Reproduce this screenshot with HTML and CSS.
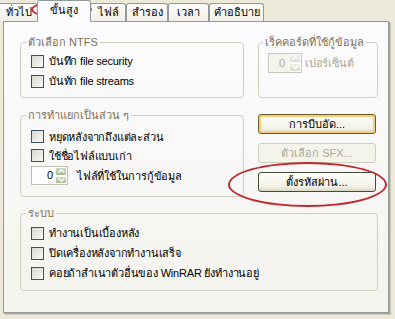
FILE: index.html
```html
<!DOCTYPE html>
<html lang="th">

<head>
    <meta charset="UTF-8">
    <meta name="viewport" content="width=device-width, initial-scale=1.0">
    <title>ขั้นสูง</title>
    <link rel="stylesheet" href="styles.css">
</head>

<body>
    <div class="window">
        <!-- แท็บด้านบน -->
        <ul class="tabs">
            <li class="tab tab-general">ทั่วไป</li>
            <li class="tab tab-advanced active">ขั้นสูง</li>
            <li class="tab tab-files">ไฟล์</li>
            <li class="tab tab-backup">สำรอง</li>
            <li class="tab tab-time">เวลา</li>
            <li class="tab tab-comment">คำอธิบาย</li>
        </ul>

        <div class="panel">
            <div class="row row-top">
                <fieldset class="group group-ntfs">
                    <legend>ตัวเลือก NTFS</legend>
                    <label class="check"><span class="box"></span>บันทึก file security</label>
                    <label class="check"><span class="box"></span>บันทัก file streams</label>
                </fieldset>
                <fieldset class="group group-recovery">
                    <legend>เร็คคอร์ดที่ใช้กู้ข้อมูล</legend>
                    <div class="spin-row disabled">
                        <span class="spin">
                            <span class="spin-value">0</span>
                            <span class="spin-btns">
                                <span class="spin-btn"><svg width="7" height="4" viewBox="0 0 7 4"><polyline points="0.5,3.5 3.5,0.8 6.5,3.5" fill="none" stroke="#fff" stroke-width="1.5"/></svg></span>
                                <span class="spin-btn"><svg width="7" height="4" viewBox="0 0 7 4"><polyline points="0.5,0.5 3.5,3.2 6.5,0.5" fill="none" stroke="#fff" stroke-width="1.5"/></svg></span>
                            </span>
                        </span>
                        <span>เปอร์เซ็นต์</span>
                    </div>
                </fieldset>
            </div>

            <div class="row row-middle">
                <fieldset class="group group-split">
                    <legend>การทำแยกเป็นส่วน ๆ</legend>
                    <label class="check"><span class="box"></span>หยุดหลังจากถึงแต่ละส่วน</label>
                    <label class="check"><span class="box"></span>ใช้ชื่อไฟล์แบบเก่า</label>
                    <div class="spin-row">
                        <span class="spin">
                            <span class="spin-value">0</span>
                            <span class="spin-btns">
                                <span class="spin-btn"><svg width="7" height="4" viewBox="0 0 7 4"><polyline points="0.5,3.5 3.5,0.8 6.5,3.5" fill="none" stroke="#fff" stroke-width="1.5"/></svg></span>
                                <span class="spin-btn"><svg width="7" height="4" viewBox="0 0 7 4"><polyline points="0.5,0.5 3.5,3.2 6.5,0.5" fill="none" stroke="#fff" stroke-width="1.5"/></svg></span>
                            </span>
                        </span>
                        <span>ไฟล์ที่ใช้ในการกู้ข้อมูล</span>
                    </div>
                </fieldset>
                <div class="buttons">
                    <button class="btn btn-default">การบีบอัด...</button>
                    <button class="btn" disabled>ตัวเลือก SFX...</button>
                    <button class="btn">ตั้งรหัสผ่าน...</button>
                </div>
            </div>

            <fieldset class="group group-system">
                <legend>ระบบ</legend>
                <label class="check"><span class="box"></span>ทำงานเป็นเบื้องหลัง</label>
                <label class="check"><span class="box"></span>ปิดเครื่องหลังจากทำงานเสร็จ</label>
                <label class="check"><span class="box"></span>คอยถ้าสำเนาตัวอื่นของ WinRAR ยังทำงานอยู่</label>
            </fieldset>
        </div>

        <!-- วงสีแดง -->
        <span class="mark mark-tab"></span>
        <span class="mark mark-button"></span>
    </div>
</body>

</html>
```
FILE: styles.css
```css
body {
    margin: 0;
    font-family: Tahoma, "Liberation Sans", "Noto Sans", sans-serif;
    font-size: 11px;
    color: #000;
    background-color: #ece9d8;
}

.window {
    position: relative;
    width: 395px;
    height: 319px;
    overflow: hidden;
}

/* แท็บ */
.tabs {
    display: flex;
    align-items: flex-end;
    height: 21px;
    margin: 0;
    padding: 0;
    list-style: none;
}

.tab {
    box-sizing: border-box;
    flex: none;
    height: 18px;
    border: 1px solid #919b9c;
    border-bottom: none;
    border-radius: 3px 3px 0 0;
    background: linear-gradient(#fefefe, #f1efe6);
    text-align: center;
    line-height: 16px;
    white-space: nowrap;
}

.tab.active {
    position: relative;
    z-index: 1;
    height: 22px;
    margin: 0 -1px -1px;
    background: #fcfcfe;
    line-height: 19px;
}

.tab-general { width: 38px; border-left: none; border-radius: 0 3px 0 0; }
.tab-advanced { width: 54px; }
.tab-files { width: 36px; }
.tab-backup { width: 42px; }
.tab-time { width: 41px; }
.tab-comment { width: 55px; }

/* พื้นที่หน้า */
.panel {
    box-sizing: border-box;
    width: 386px;
    height: 292px;
    margin-left: 3px;
    padding: 14px 10px 0 16px;
    border: 1px solid #919b9c;
    background: linear-gradient(#fcfcfe, #f4f3ee);
    box-shadow: 1px 1px 0 #aca899, 2px 2px 0 #cbc7b8;
}

.row {
    display: flex;
    gap: 14px;
}

.row-middle {
    margin-top: 11px;
}

.group {
    box-sizing: border-box;
    min-width: 0;
    margin: 0;
    padding: 2px 0 0 10px;
    border: 1px solid #d0d0bf;
    border-radius: 4px;
}

.group legend {
    margin-left: -5px;
    padding: 0 2px;
    line-height: 13px;
    color: #7f6f59;
}

.group-ntfs { width: 224px; height: 62px; }
.group-ntfs .check { height: 20px; }
.group-recovery { width: 120px; height: 62px; padding-left: 9px; padding-top: 3px; }
.group-split { width: 224px; height: 88px; padding-top: 5px; }
.group-system { width: 358px; height: 84px; margin-top: 10px; padding-top: 3px; }
.group-system .check { height: 20px; }

/* ช่องกาเครื่องหมาย */
.check {
    display: flex;
    align-items: center;
    gap: 4px;
    height: 19px;
    letter-spacing: -0.2px;
    white-space: nowrap;
}

.box {
    box-sizing: border-box;
    flex: none;
    width: 13px;
    height: 13px;
    margin-right: 1px;
    border: 1px solid #3f5066;
    background: linear-gradient(135deg, #d8d8d0, #fbfbf9);
}

/* ช่องตัวเลข */
.spin-row {
    display: flex;
    align-items: center;
    gap: 9px;
    height: 21px;
    letter-spacing: -0.2px;
    white-space: nowrap;
}

.spin {
    box-sizing: border-box;
    display: flex;
    width: 37px;
    height: 19px;
    border: 1px solid #bdbdb5;
    background: #fff;
    letter-spacing: 0;
}

.spin-value {
    flex: 1;
    padding-right: 2px;
    text-align: right;
    line-height: 17px;
}

.spin-btns {
    display: flex;
    flex-direction: column;
    width: 12px;
}

.spin-btn {
    display: flex;
    flex: 1;
    align-items: center;
    justify-content: center;
    border: 1px solid #fff;
    border-radius: 2px;
    background: linear-gradient(#c9d8bf, #a7bb9a);
}

.disabled {
    gap: 3px;
    color: #aca899;
}

.disabled .spin {
    width: 34px;
    height: 20px;
    background: #f5f4ea;
    border-color: #c9c7ba;
}

.disabled .spin-value {
    line-height: 18px;
    padding-right: 4px;
}

.disabled .spin-btn {
    background: linear-gradient(#eeede5, #dcdad0);
}

/* ปุ่ม */
.buttons {
    display: flex;
    flex-direction: column;
    gap: 9px;
    padding: 5px 0 0 0;
}

.btn {
    box-sizing: border-box;
    width: 118px;
    height: 20px;
    padding: 0;
    border: 1px solid #3e4d33;
    border-radius: 3px;
    background: linear-gradient(#fffffb, #f3f2e7 75%, #d9d6c3);
    font: inherit;
    color: #000;
}

.btn-default {
    border-color: #6b5a2a;
    box-shadow: inset 0 0 0 2px #f3cf78;
}

.btn:disabled {
    border-color: #cfcdc0;
    background: #f5f4ea;
    color: #aca899;
}

/* วงสีแดง */
.mark {
    position: absolute;
    box-sizing: border-box;
    border: 2px solid #c1272d;
    border-radius: 50%;
}

.mark-tab {
    left: 31px;
    top: 1px;
    width: 61px;
    height: 17px;
}

.mark-button {
    left: 228px;
    top: 162px;
    width: 159px;
    height: 45px;
}
```
